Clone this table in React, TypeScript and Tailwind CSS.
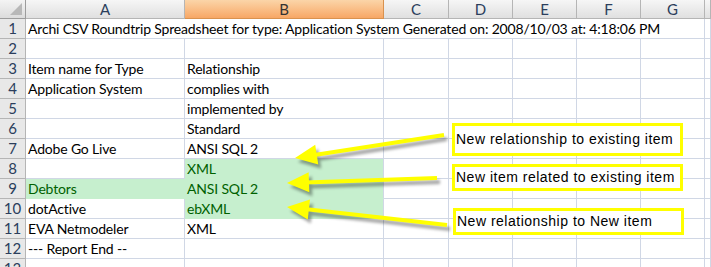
const COLS = [
  { label: "A", w: 159 },
  { label: "B", w: 199 },
  { label: "C", w: 65 },
  { label: "D", w: 64 },
  { label: "E", w: 64 },
  { label: "F", w: 64 },
  { label: "G", w: 64 },
  { label: "", w: 6 },
];

type Cell = { text?: string; good?: boolean; overflow?: boolean };

const ROWS: Cell[][] = [
  [{ text: "Archi CSV Roundtrip Spreadsheet for type: Application System Generated on: 2008/10/03 at: 4:18:06 PM", overflow: true }],
  [],
  [{ text: "Item name for Type" }, { text: "Relationship" }],
  [{ text: "Application System" }, { text: "complies with" }],
  [{}, { text: "implemented by" }],
  [{}, { text: "Standard" }],
  [{ text: "Adobe Go Live" }, { text: "ANSI SQL 2" }],
  [{}, { text: "XML", good: true }],
  [{ text: "Debtors", good: true }, { text: "ANSI SQL 2", good: true }],
  [{ text: "dotActive" }, { text: "ebXML", good: true }],
  [{ text: "EVA Netmodeler" }, { text: "XML" }],
  [{ text: "--- Report End --" }],
  [],
];

const font = { fontFamily: "Lato, 'Open Sans', sans-serif" };

function Callout({ text, className }: { text: string; className: string }) {
  return (
    <div
      className={`absolute bg-white border-[3px] border-[#ffff00] flex items-center pl-[1px] text-[14px] text-black tracking-[0.5px] whitespace-nowrap ${className}`}
      style={{ fontFamily: "'Liberation Sans', Arial, sans-serif" }}
    >
      {text}
    </div>
  );
}

function Arrow({ x1, y1, x2, y2 }: { x1: number; y1: number; x2: number; y2: number }) {
  // x1,y1 = tail, x2,y2 = tip
  const dx = x2 - x1;
  const dy = y2 - y1;
  const len = Math.hypot(dx, dy);
  const ux = dx / len;
  const uy = dy / len;
  const hl = 22;
  const hw = 10;
  const bx = x2 - ux * hl;
  const by = y2 - uy * hl;
  const head = `${x2},${y2} ${bx - uy * hw},${by + ux * hw} ${bx + uy * hw},${by - ux * hw}`;
  return (
    <g>
      <g transform="translate(3,4)" opacity="0.35" filter="url(#blur)">
        <line x1={x1} y1={y1} x2={bx + ux * 4} y2={by + uy * 4} stroke="#000" strokeWidth="4" />
        <polygon points={head} fill="#000" />
      </g>
      <line x1={x1} y1={y1} x2={bx + ux * 4} y2={by + uy * 4} stroke="#ffff00" strokeWidth="4" />
      <polygon points={head} fill="#ffff00" />
    </g>
  );
}

export default function App() {
  return (
    <div className="relative w-[711px] h-[267px] overflow-hidden bg-white" style={font}>
      <div className="flex h-[19px]">
        <div className="w-[26px] shrink-0 bg-gradient-to-b from-[#f4f4f4] to-[#dcdcdc] border-r border-b border-[#9c9c9c] relative">
          <div className="absolute right-[3px] bottom-[3px] w-0 h-0 border-l-[12px] border-l-transparent border-b-[12px] border-b-[#b8b8b8]" />
        </div>
        {COLS.map((c, i) => (
          <div
            key={i}
            className={`shrink-0 flex items-center justify-center text-[15px] border-r border-b ${
              c.label === "B"
                ? "bg-gradient-to-b from-[#fbd5a8] to-[#f7a765] border-[#d9924f] text-[#333]"
                : "bg-gradient-to-b from-[#f6f6f6] to-[#e0e0e0] border-[#b5b5b5] text-[#2b3e5c]"
            }`}
            style={{ width: c.w }}
          >
            {c.label}
          </div>
        ))}
      </div>
      {ROWS.map((row, r) => (
        <div key={r} className="flex h-[20px]">
          <div className="w-[26px] shrink-0 flex items-center justify-center bg-[#e8e8e8] border-r border-b border-[#b5b5b5] text-[15px] text-[#2b3e5c]">
            {r + 1}
          </div>
          {COLS.map((c, i) => {
            const cell = row[i] || {};
            const covered = row[0]?.overflow && i < 6;
            const nextGood = row[i + 1]?.good;
            return (
              <div
                key={i}
                className={`shrink-0 relative border-b border-[#d0d7e5] text-[14px] tracking-[-0.17px] leading-[19px] pl-[2px] whitespace-nowrap ${
                  covered ? "" : "border-r"
                } ${cell.good ? "bg-[#c6efce] text-[#006100] border-b-[#c6efce]" : "text-black"} ${
                  cell.good && nextGood ? "border-r-[#c6efce]" : ""
                }`}
                style={{ width: c.w }}
              >
                {cell.text && <span className={cell.overflow ? "absolute left-[2px] top-0" : ""}>{cell.text}</span>}
              </div>
            );
          })}
        </div>
      ))}
      <svg className="absolute left-0 top-0" width="711" height="267">
        <defs>
          <filter id="blur" x="-10%" y="-50%" width="120%" height="200%">
            <feGaussianBlur stdDeviation="1.5" />
          </filter>
        </defs>
        <Arrow x1={444} y1={135} x2={295} y2={158} />
        <Arrow x1={437} y1={178} x2={287} y2={183} />
        <Arrow x1={447} y1={225} x2={287} y2={207} />
      </svg>
      <Callout text="New relationship to existing item" className="left-[452px] top-[123px] w-[231px] h-[33px]" />
      <Callout text="New item related to existing item" className="left-[452px] top-[164px] w-[231px] h-[27px]" />
      <Callout text="New relationship to New item" className="left-[453px] top-[208px] w-[231px] h-[27px]" />
    </div>
  );
}
